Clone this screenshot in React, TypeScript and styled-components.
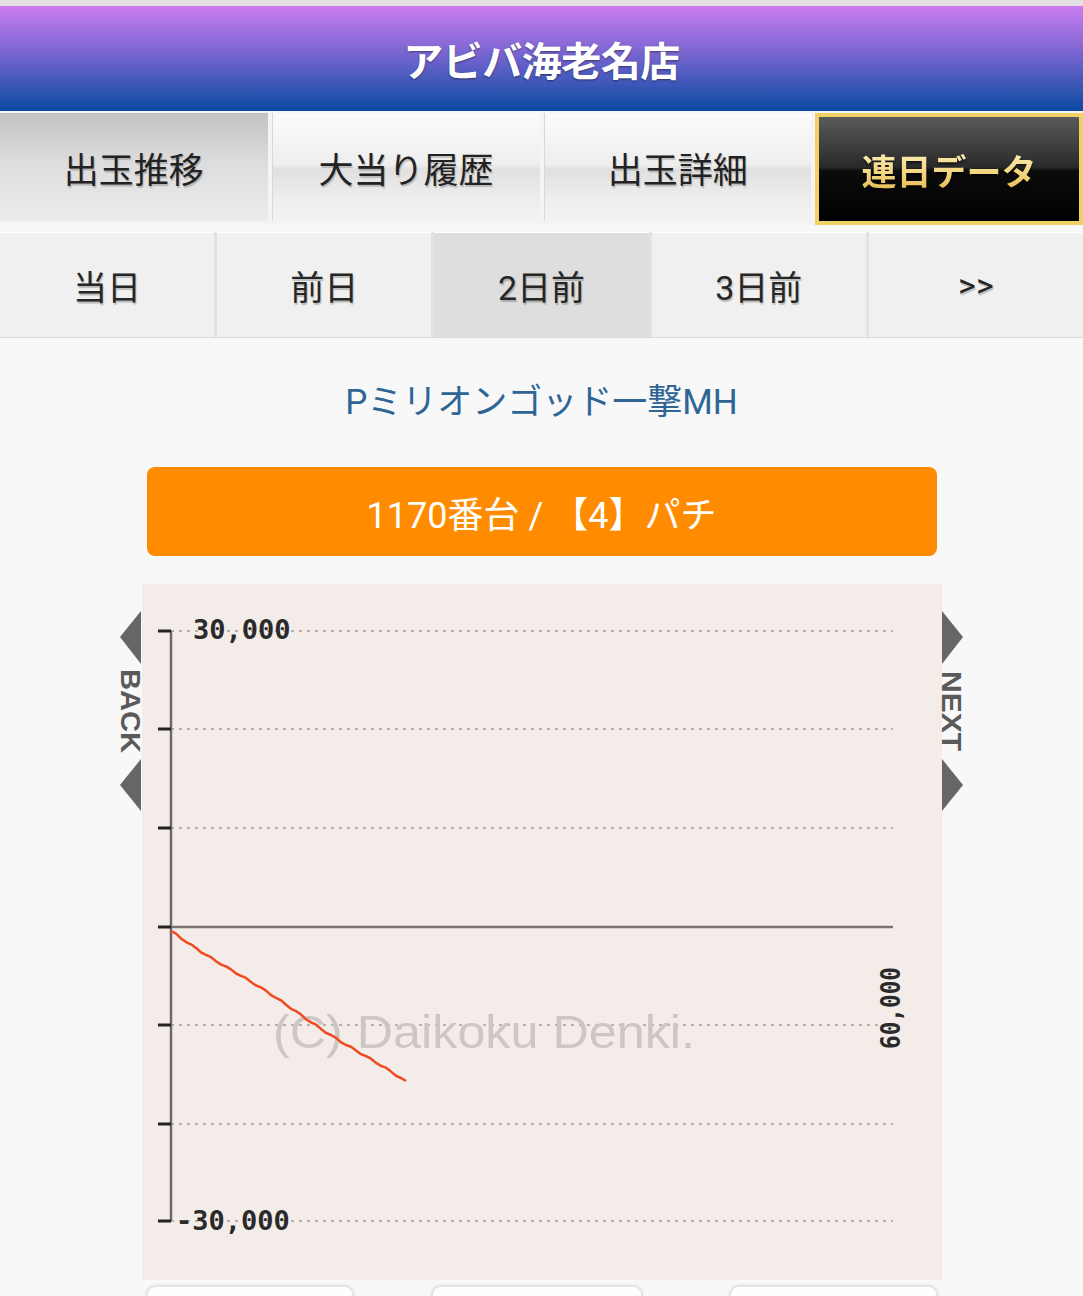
import * as React from 'react';
import styled, { createGlobalStyle } from 'styled-components';

const GlobalStyle = createGlobalStyle`
  html, body {
    margin: 0;
    padding: 0;
    background: #f8f8f8;
    font-family: Roboto, "Noto Sans CJK JP", sans-serif;
  }
`;

const mainTabs = [
  { label: '出玉推移', variant: 'pressed' },
  { label: '大当り履歴', variant: 'normal' },
  { label: '出玉詳細', variant: 'normal' },
  { label: '連日データ', variant: 'gold' },
] as const;

const dayTabs = ['当日', '前日', '2日前', '3日前', '>>'];

// red line: starts just under zero and drifts down, slightly jagged
const linePoints = (() => {
  const pts: string[] = [];
  for (let x = 29; x <= 268; x += 5) {
    const t = x - 29;
    const y = 347 + t * 0.645 + Math.sin(t * 0.9) * 0.8 + Math.sin(t * 0.05) * 1.2;
    pts.push(`${x},${y.toFixed(1)}`);
  }
  return pts.join(' ');
})();

const gridYs = [47, 145, 244, 441, 540, 637];
const tickYs = [47, 145, 244, 343, 441, 540, 637];

export default function App() {
  return (
    <Page>
      <GlobalStyle />
      <StatusEdge />
      <Header>
        <h1>アビバ海老名店</h1>
      </Header>

      <MainNav>
        {mainTabs.map((t) => (
          <MainTab key={t.label} $variant={t.variant}>
            <span>{t.label}</span>
          </MainTab>
        ))}
      </MainNav>

      <DayNav>
        {dayTabs.map((d) => (
          <DayTab key={d} $active={d === '2日前'}>
            {d}
          </DayTab>
        ))}
      </DayNav>

      <Content>
        <MachineName>Pミリオンゴッド一撃MH</MachineName>
        <UnitButton type="button">1170番台 / 【4】パチ</UnitButton>

        <ChartRow>
          <SideNav>
            <svg width="22" height="200" viewBox="0 0 22 200" overflow="visible">
              <polygon points="21,0 0,26 21,53" fill="#666" />
              <text
                x="0"
                y="0"
                transform="translate(1 100) rotate(90)"
                textAnchor="middle"
                fontFamily="'Liberation Sans', sans-serif"
                fontWeight="bold"
                fontSize="27"
                fill="#5a5a5a"
                textLength="84"
                lengthAdjust="spacingAndGlyphs"
              >
                BACK
              </text>
              <polygon points="21,148 0,174 21,200" fill="#666" />
            </svg>
          </SideNav>

          <ChartBox>
            <svg width="800" height="696" viewBox="0 0 800 696">
              <rect width="800" height="696" fill="#f4ece8" />
              {gridYs.map((y) => (
                <line key={y} x1="29" y1={y} x2="751" y2={y} stroke="#b8b2af" strokeWidth="2" strokeDasharray="3 5" />
              ))}
              <text
                x="131"
                y="464"
                fontFamily="'Liberation Sans', sans-serif"
                fontSize="46"
                fill="#cdc7c4"
                textLength="422"
                lengthAdjust="spacingAndGlyphs"
              >
                (C) Daikoku Denki.
              </text>
              <line x1="29" y1="343" x2="751" y2="343" stroke="#7a7574" strokeWidth="2.5" />
              <line x1="29" y1="47" x2="29" y2="637" stroke="#6e6968" strokeWidth="2.5" />
              {tickYs.map((y) => (
                <line key={y} x1="16" y1={y} x2="29" y2={y} stroke="#222" strokeWidth="3" />
              ))}
              <polyline points={linePoints} fill="none" stroke="#f04a20" strokeWidth="2.5" strokeLinejoin="round" />
              <text x="51" y="55" fontFamily="'DejaVu Sans Mono', monospace" fontWeight="bold" fontSize="27" fill="#2a2a2a">
                30,000
              </text>
              <text x="34" y="646" fontFamily="'DejaVu Sans Mono', monospace" fontWeight="bold" fontSize="27" fill="#2a2a2a">
                -30,000
              </text>
              <text
                x="0"
                y="0"
                transform="translate(758 424) rotate(-90)"
                textAnchor="middle"
                fontFamily="'DejaVu Sans Mono', monospace"
                fontWeight="bold"
                fontSize="26"
                fill="#2a2a2a"
                textLength="82"
                lengthAdjust="spacingAndGlyphs"
              >
                60,000
              </text>
            </svg>
          </ChartBox>

          <SideNav>
            <svg width="22" height="200" viewBox="0 0 22 200" overflow="visible">
              <polygon points="1,0 22,26 1,53" fill="#666" />
              <text
                x="0"
                y="0"
                transform="translate(1 100) rotate(90)"
                textAnchor="middle"
                fontFamily="'Liberation Sans', sans-serif"
                fontWeight="bold"
                fontSize="27"
                fill="#5a5a5a"
                textLength="80"
                lengthAdjust="spacingAndGlyphs"
              >
                NEXT
              </text>
              <polygon points="1,148 22,174 1,200" fill="#666" />
            </svg>
          </SideNav>
        </ChartRow>

        <BottomRow>
          <SmallButton $width={204} />
          <SmallButton $width={208} $shift={-9} />
          <SmallButton $width={205} />
        </BottomRow>
      </Content>
    </Page>
  );
}

const Page = styled.div`
  width: 1083px;
  min-height: 1296px;
  overflow: hidden;
`;

const StatusEdge = styled.div`
  height: 6px;
  background: #e2e0e2;
`;

const Header = styled.header`
  height: 105px;
  display: flex;
  align-items: center;
  justify-content: center;
  background: linear-gradient(to bottom, #c97cf0 0%, #8d6ad8 35%, #4f5cc0 65%, #0b4a9f 100%);

  h1 {
    margin: 0;
    color: #fff;
    font-family: "Noto Sans CJK JP", sans-serif;
    font-weight: 700;
    font-size: 40px;
    letter-spacing: -0.5px;
    text-shadow: 0 1px 2px rgba(0, 0, 0, 0.45);
  }
`;

const MainNav = styled.nav`
  display: grid;
  grid-template-columns: repeat(4, 1fr);
  gap: 4px;
  padding: 2px 0 0;
  background: #f4f4f4;
  height: 114px;
  box-sizing: border-box;
`;

const MainTab = styled.div<{ $variant: 'pressed' | 'normal' | 'gold' }>`
  display: flex;
  align-items: center;
  justify-content: center;
  box-sizing: border-box;
  font-family: "Noto Sans CJK JP", sans-serif;
  font-size: 35px;
  color: #222;
  text-shadow: 1px 2px 1px rgba(0, 0, 0, 0.2);
  border-left: 1px solid #d8d8d8;
  height: ${(p) => (p.$variant === 'gold' ? '112px' : '108px')};
  background: ${(p) =>
    p.$variant === 'pressed'
      ? 'linear-gradient(to bottom, #c2c2c2 0%, #dcdcdc 45%, #ececec 100%)'
      : p.$variant === 'normal'
      ? 'linear-gradient(to bottom, #fbfbfb 0%, #eeeeee 48%, #e0e0e0 52%, #eeeeee 80%, #f3f3f3 100%)'
      : 'linear-gradient(to bottom, #5a5a5a 0%, #2a2a2a 48%, #0c0c0c 52%, #000 100%)'};

  ${(p) =>
    p.$variant === 'gold' &&
    `
    border: 4px solid #f0d264;
    span {
      font-weight: 700;
      color: #f7dc84;
      background: linear-gradient(to bottom, #fff6c8 0%, #f2d37a 60%, #e3b64a 100%);
      -webkit-background-clip: text;
      background-clip: text;
      -webkit-text-fill-color: transparent;
      text-shadow: none;
      filter: drop-shadow(0 2px 1px rgba(0,0,0,0.6));
    }
  `}

  &:first-child {
    border-left: none;
  }
`;

const DayNav = styled.nav`
  display: grid;
  grid-template-columns: repeat(5, 1fr);
  gap: 3px;
  margin-top: 7px;
  background: #e2e2e2;
  border-bottom: 1px solid #dadada;
`;

const DayTab = styled.div<{ $active: boolean }>`
  height: 104px;
  display: flex;
  align-items: center;
  justify-content: center;
  font-family: Roboto, "Noto Sans CJK JP", sans-serif;
  font-size: 34px;
  color: #262626;
  text-shadow: 1px 2px 1px rgba(0, 0, 0, 0.22);
  background: ${(p) => (p.$active ? '#dedede' : '#f0f0f0')};
  border-top: 1px solid #fff;
`;

const Content = styled.main`
  display: flex;
  flex-direction: column;
  align-items: center;
`;

const MachineName = styled.h2`
  margin: 42px 0 0;
  height: 46px;
  line-height: 46px;
  font-family: Roboto, "Noto Sans CJK JP", sans-serif;
  font-weight: 400;
  font-size: 35px;
  color: #2f6595;
`;

const UnitButton = styled.button`
  margin-top: 41px;
  width: 790px;
  height: 89px;
  border: none;
  border-radius: 8px;
  background: #ff8c00;
  color: #fff;
  font-family: Roboto, "Noto Sans CJK JP", sans-serif;
  font-size: 36px;
  cursor: pointer;
`;

const ChartRow = styled.div`
  margin-top: 28px;
  display: flex;
  align-items: flex-start;
`;

const SideNav = styled.div`
  width: 21px;
  padding-top: 27px;
  display: flex;
  justify-content: center;

  svg {
    display: block;
  }
`;

const ChartBox = styled.div`
  width: 800px;
  height: 696px;

  svg {
    display: block;
  }
`;

const BottomRow = styled.div`
  margin-top: 5px;
  width: 792px;
  display: flex;
  justify-content: space-between;
`;

const SmallButton = styled.div<{ $width: number; $shift?: number }>`
  width: ${(p) => p.$width}px;
  height: 60px;
  margin-left: ${(p) => p.$shift ?? 0}px;
  background: linear-gradient(to bottom, #fff, #f2f2f2);
  border: 2px solid #e4e4e4;
  border-radius: 10px;
  box-shadow: 0 0 3px rgba(0, 0, 0, 0.12);
`;
